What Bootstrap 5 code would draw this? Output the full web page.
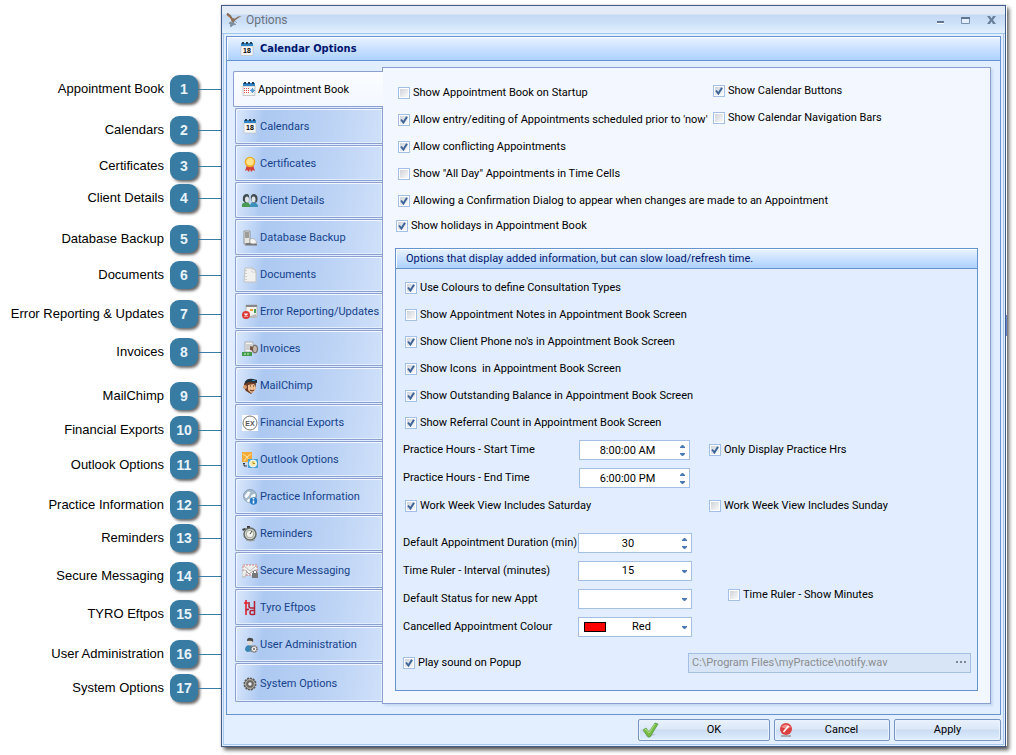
<!DOCTYPE html>
<html lang="en">
<head>
<meta charset="utf-8">
<meta name="viewport" content="width=device-width, initial-scale=1">
<title>Calendar Options</title>
<link href="https://cdn.jsdelivr.net/npm/bootstrap@5.3.0/dist/css/bootstrap.min.css" rel="stylesheet">
<style>
:root{--ui:Roboto,"Liberation Sans",sans-serif;--line:#6593cf;--soft:#a3bfe5;--tabline:#8b9fd0}
body{background:#fff;color:#000;font:11px/14px var(--ui)}
button,input,select{font:inherit}
/* numbered callouts */
.callouts{flex:0 0 221px;padding-top:75px;display:grid;align-content:start;grid-template-rows:41px 36px 32px 41px 36px 39px 38px 44px 34px 35px 40px 33px 38px 38px 40px 34px 28px;font:13px/28px "Liberation Sans",Arial,sans-serif;margin:0}
.callouts li{height:28px;display:flex;align-items:center;justify-content:flex-end;white-space:nowrap}
.callouts b{width:28px;height:28px;margin-left:6px;border-radius:9px;background:#387ba3;color:#e8f3fa;text-align:center;font-size:14px;box-shadow:2px 2px 3px rgba(0,0,0,.6)}
.callouts li::after{content:"";width:23px;height:1px;background:#387ba3}
/* window frame */
.win{position:relative;min-width:0;margin:5px 10px 9px 0;border:1px solid #3f5c8d;background:#e3efff;box-shadow:3px 3px 4px rgba(0,0,0,.65),0 0 2px rgba(0,0,0,.2)}
.win::after{content:"";position:absolute;top:0;bottom:0;right:-2px;width:1px;background:linear-gradient(#fff 309px,#6c86d0 309px 330px,#fff 330px)}
.titlebar{height:28px;padding:0 9px 0 4px;border-bottom:1px solid #9cc7f0;background:linear-gradient(#e3ebf7 0 8px,#c6d9f3 9px,#cbdff7 16px,#e3f1fe);color:#69727e;font-size:12px}
.titlebar button{border:0;padding:0;background:none;line-height:0}
.winbody{margin:0 1px 1px;padding:2px 2px 3px;border:solid #a6c8f0;border-width:0 1px 1px}
.bar{background:linear-gradient(#e9f3ff,#c5deff 60%,#add1ff);border-bottom:1px solid var(--line);box-shadow:inset 1px 1px #fff}
.panel{border:1px solid var(--line)}
.panel>.bar{height:24px;padding-left:13px;gap:6px;font:bold 11px/14px "DejaVu Sans Condensed",sans-serif;color:#00156e}
.panelbody{padding:6px 9px 10px 6px;background:#e1eeff}
/* page tabs */
.pages{flex:0 0 149px;padding-top:4px;gap:1px}
.pages .nav-link{display:flex;align-items:center;height:36px;width:147px;margin-left:2px;padding:2px 0 0 6px;border:1px solid var(--tabline);border-right-width:0;border-radius:2px 0 0 2px;box-shadow:inset 1px 1px #f2f7ff,inset -1px -1px #e3eefc;background:linear-gradient(100deg,#dbe8fb 0,#c6daf7 9%,#adc9f1 19%,#b8d0f4 55%,#cfe0f9);color:#15428b;white-space:nowrap;gap:2px}
.pages .nav-link.active{position:relative;width:150px;margin-left:0;padding-left:8px;background:linear-gradient(#fbfdff,#f3f7ff);border-color:var(--tabline);box-shadow:none;color:#000}
.pages .nav-link:last-child{height:39px}
.pages svg{flex:none}
.pane{min-width:0;margin-left:-1px;border:1px solid var(--tabline);padding:9px 12px 12px;background:#f3f7ff;box-shadow:2px 2px 2px #c6d9f3}
.pages{z-index:1}
/* controls */
.opt{display:flex;align-items:center;height:27px;gap:3px;white-space:nowrap}
.opt .form-check-input{flex:none;width:12px;height:12px;margin:0;border:1px solid var(--soft);border-radius:0;background:linear-gradient(135deg,#cfd3d9,#fafafa) center/8px 8px no-repeat #fff;box-shadow:none}
.opt .form-check-input:checked{background:url("data:image/svg+xml,%3Csvg xmlns='http://www.w3.org/2000/svg' viewBox='0 0 10 10'%3E%3Cpath d='M2 4.5l2.4 3L8 1.8' fill='none' stroke='%233d6599' stroke-width='2'/%3E%3C/svg%3E") center/10px 10px no-repeat,linear-gradient(135deg,#cfd3d9,#fafafa) center/8px 8px no-repeat #fff}
.leftopts{flex:0 0 318px;min-width:0;width:318px;padding:2px 0 0 3px}
.leftopts .tight{height:24px;margin-left:-2px}
.group{margin-top:10px;border:1px solid var(--line);background:#e2eeff}
.group>.bar{height:20px;padding-left:10px;color:#00156e}
.groupbody{padding:5px 6px 14px 7px}
.indent{padding-left:2px}
.fields{display:grid;grid-template-columns:175px 114px 1fr;grid-auto-rows:28px;align-items:center}
.fields.lower{margin-top:9px}
.fields .side{margin-left:17px}
.fields .far{margin-left:36px;margin-bottom:8px}
.box{display:flex;align-items:center;height:20px;border:1px solid var(--soft);background:#fff}
.box.narrow{margin:0 2px 0 1px}
.box input,.box select{flex:1;min-width:0;width:0;height:18px;padding:0;border:0;background:none;text-align:center;text-align-last:center;outline:0;color:#000}
.box select{appearance:none;padding-right:14px;background:url("data:image/svg+xml,%3Csvg xmlns='http://www.w3.org/2000/svg' viewBox='0 0 5 3'%3E%3Cpath d='M0 0h5v1L3 3H2L0 1z' fill='%234a7ab5'/%3E%3C/svg%3E") right 4px center/5px 3px no-repeat}
.spin{width:14px;display:flex;flex-direction:column}
.spin button{height:8px;padding:0;border:0;background:none;line-height:0}
.swatch{width:22px;height:10px;margin-left:5px;border:1px solid #000;background:red}
.box.path{width:283px;background:#d8e5f6}
.box.path input{padding-left:3px;text-align:left;text-align-last:left;color:#8b8d90}
.path button{border:0;padding:0 3px;background:none;line-height:0}
.cmd{height:22px;padding:0;border:1px solid #7793c0;border-radius:2px;background:linear-gradient(#e9f1fc,#dce8f8 45%,#cbdcf3 50%,#dfeeff);box-shadow:inset 0 0 0 1px #e9f3ff;color:#000;display:flex;align-items:center}
.cmd span{flex:1}
.cmd svg{margin-left:3px}
.ok{width:132px}.cancel{width:116px}.apply{width:107px}
</style>
</head>
<body>
<div class="d-flex align-items-start">
<ol class="callouts list-unstyled" aria-label="Callouts">
<li>Appointment Book<b>1</b></li><li>Calendars<b>2</b></li><li>Certificates<b>3</b></li><li>Client Details<b>4</b></li><li>Database Backup<b>5</b></li><li>Documents<b>6</b></li><li>Error Reporting &amp; Updates<b>7</b></li><li>Invoices<b>8</b></li><li>MailChimp<b>9</b></li><li>Financial Exports<b>10</b></li><li>Outlook Options<b>11</b></li><li>Practice Information<b>12</b></li><li>Reminders<b>13</b></li><li>Secure Messaging<b>14</b></li><li>TYRO Eftpos<b>15</b></li><li>User Administration<b>16</b></li><li>System Options<b>17</b></li>
</ol>
<main class="win flex-grow-1">
<header class="titlebar d-flex align-items-center">
<svg width="16" height="16" viewBox="0 0 16 16"><path d="M1 1.500l3 2.500 2 3" stroke="#7d6a5a" stroke-width="2" fill="none"/><path d="M1 3l4 3 1 3" stroke="#b46a35" fill="none"/><path d="M6 6l3 .5 3-2 3.500-.5-3 2-3 2-2 3-2-1z" fill="#8b735f"/><path d="M4 10l3 .5 3 2-3 .5-2 2-1-1 1-1.500-2-1zM9 9l2 2" fill="#7c8d9c" stroke="#7c8d9c" stroke-width=".6"/></svg>
<span class="ms-1 flex-grow-1">Options</span>
<button aria-label="Minimize"><svg width="8" height="14"><path d="M0 8h7v2H0z" fill="#5f7590"/><path d="M0 10h7v1H0z" fill="#fff"/></svg></button>
<button class="ms-3" aria-label="Maximize"><svg width="10" height="14"><path d="M.5 4.500h8v6h-8z" fill="#e3effc" stroke="#7890b0"/><path d="M0 4h9v2H0z" fill="#5f7590"/></svg></button>
<button class="ms-3" aria-label="Close"><svg width="9" height="14"><path d="M0 3h3l1.500 2.500L6 3h3L6 7l3 4H6L4.500 8.500 3 11H0l3-4z" fill="#6a7f99"/></svg></button>
</header>
<div class="winbody">
<section class="panel">
<div class="bar d-flex align-items-center">
<svg width="14" height="14" viewBox="0 0 14 14"><path d="M1 4h12v9.500H1z" fill="#f6f6f6" stroke="#bbb" stroke-width=".6"/><path d="M1 1h12v3H1z" fill="#2f82c4"/><path d="M2 0h2v2H2zM6 0h2v2H6zM10 0h2v2h-2z" fill="#263a50"/><text x="7" y="11" text-anchor="middle" font-family="Liberation Sans" font-weight="bold" font-size="7">18</text></svg>
<span>Calendar Options</span></div>
<div class="panelbody d-flex">
<nav class="pages nav flex-column flex-nowrap" aria-label="Option pages">
<button class="nav-link active"><svg width="14" height="16" viewBox="0 0 14 16"><path d="M1 4h12v9.500H1z" fill="#f8f8f8" stroke="#aaa" stroke-width=".6"/><path d="M1 1h12v3H1z" fill="#2f82c4"/><path d="M2 0h2v2H2zM6 0h2v2H6zM10 0h2v2h-2z" fill="#263a50"/><path d="M2 6.500h6M2 8.500h5M2 10.500h5" stroke="#e24b4b" stroke-dasharray="1 1"/><path d="M8 8.500h5M10.500 6v5M8.800 7l3.500 3.300M12.300 7L8.800 10.300" stroke="#5b9bd0"/></svg>Appointment Book</button>
<button class="nav-link"><svg width="16" height="16" viewBox="0 0 16 16"><path d="M2 4h12v10H2z" fill="#f6f6f6" stroke="#bbb" stroke-width=".6"/><path d="M2 1h12v3H2z" fill="#2f82c4"/><path d="M3 0h2v2H3zM7 0h2v2H7zM11 0h2v2h-2z" fill="#263a50"/><text x="8" y="11" text-anchor="middle" font-family="Liberation Sans" font-weight="bold" font-size="7">18</text></svg>Calendars</button>
<button class="nav-link"><svg width="16" height="16" viewBox="0 0 16 16"><path d="M5 9l-2 6 2-1 2 2 1-3 1 3 2-2 2 1-2-6z" fill="#d6403a"/><circle cx="8" cy="6" r="5.300" fill="#f3a823"/><circle cx="8" cy="5.800" r="3.800" fill="#ffe48b"/></svg>Certificates</button>
<button class="nav-link"><svg width="16" height="16" viewBox="0 0 16 16"><path d="M0 14v-3l3-2h3l2 3v2z" fill="#499a52"/><path d="M8 14v-2l2-3h3l3 3v2z" fill="#3c91bb"/><path d="M1 8q-1-7 4-7 3 0 2 7l-3 2zM9 7q-1-6 3-6 5 1 3 8l-4 1z" fill="#414c50"/><ellipse cx="5" cy="6.500" rx="2" ry="3" fill="#dfe5e7"/><ellipse cx="11.500" cy="6.500" rx="2" ry="3" fill="#dfe5e7"/></svg>Client Details</button>
<button class="nav-link"><svg width="16" height="16" viewBox="0 0 16 16"><path d="M2 1h6v13H2z" fill="#e5e5e2" stroke="#777" stroke-width=".7"/><path d="M3 3h4M3 5h4M3 7h4" stroke="#555"/><path d="M4 13h8l3 1v1.500H3z" fill="#777"/><path d="M8 9q5-2 7 4l-4 1-3-1z" fill="#f5f5f5" stroke="#999" stroke-width=".6"/></svg>Database Backup</button>
<button class="nav-link"><svg width="16" height="16" viewBox="0 0 16 16"><path d="M3 1h8l3 3v11H2z" fill="#f1f1ef" stroke="#c2c2c2"/><path d="M10 1v4h4z" fill="#fff" stroke="#bbb" stroke-width=".6"/><path d="M4 3v10" stroke="#aaa" stroke-dasharray="1 2"/></svg>Documents</button>
<button class="nav-link"><svg width="16" height="16" viewBox="0 0 16 16"><path d="M4 1h11v12H4z" fill="#f3f2ed" stroke="#aaa" stroke-width=".7"/><path d="M4 1h11v2H4z" fill="#888"/><path d="M8 5h3v2H8z" fill="#e9a23c"/><path d="M12 5h2v4h-2z" fill="#4a9a58"/><path d="M8 12l6-2 1 4H8z" fill="#bbb"/><circle cx="4" cy="11" r="4" fill="#da3a36"/><path d="M2.500 9.500l3 3M5.500 9.500l-3 3" stroke="#fff" stroke-width="1.300"/></svg>Error Reporting/Updates</button>
<button class="nav-link"><svg width="16" height="16" viewBox="0 0 16 16"><path d="M3 1h8v10H3z" fill="#f4f4f4" stroke="#999" stroke-width=".7"/><path d="M5 3v6M7 3v6M9 3v6" stroke="#aaa"/><ellipse cx="13" cy="8" rx="2.500" ry="4" fill="#c3b9af" stroke="#6b5a50"/><path d="M8 5l3 1v4l-3-1z" fill="#76584a"/><path d="M0 11h10v4H0z" fill="#419b4a"/><path d="M2 13h6" stroke="#d8f2d5" stroke-dasharray="2 1"/></svg>Invoices</button>
<button class="nav-link"><svg width="16" height="16" viewBox="0 0 16 16"><path d="M2 6q1-4 7-4 5 0 5 4l-1 6-4 4-5-3-2-3z" fill="#6f3c22"/><path d="M6 7l6-1 2 4-2 4-3 1-3-3z" fill="#eebf95"/><path d="M3 4q2-4 8-3l4 1v3l-8-1-4 2z" fill="#24313d"/><path d="M10 2h3v1h-3z" fill="#3586c4"/><circle cx="3" cy="9" r="2" fill="#d59b70"/><path d="M8 8h1M11 8h1M8 12q2 2 4 0" stroke="#4b2516" fill="none"/></svg>MailChimp</button>
<button class="nav-link"><svg width="16" height="16" viewBox="0 0 16 16"><path d="M0 0h16v16H0z" fill="#fff"/><circle cx="8" cy="8" r="7" fill="#fff" stroke="#777"/><text x="8" y="10.500" text-anchor="middle" font-family="Liberation Sans" font-size="7" font-weight="bold" fill="#555">EX</text></svg>Financial Exports</button>
<button class="nav-link"><svg width="16" height="16" viewBox="0 0 16 16"><path d="M0 0h10v10H0z" fill="#f3ac37"/><path d="M1 2l4 3 4-3M2 9l3-4 3 4" stroke="#ffe6a8" fill="none"/><path d="M6 7h10v9H6z" fill="#48a3d7"/><circle cx="11" cy="11.500" r="3.500" fill="#f7e9a7" stroke="#fff"/><path d="M11 9.500v2h2" stroke="#b78d25" fill="none"/><path d="M2 11v3h3M1 12l1-1 1 1" stroke="#333" fill="none"/></svg>Outlook Options</button>
<button class="nav-link"><svg width="16" height="16" viewBox="0 0 16 16"><circle cx="8" cy="7" r="6.500" fill="#a6bdcf" stroke="#738aa0" stroke-width=".7"/><path d="M2 7l4-5 3 1-2 4-3 3zM9 6l4-2 1 3-3 3-3-1zM4 12l3-3 2 2-2 3z" fill="#f7fafc" stroke="#8ca1b4" stroke-width=".5"/><circle cx="11.500" cy="12" r="3.700" fill="#277bc6"/><path d="M11.500 9v1.500M11.500 11.500v3" stroke="#fff" stroke-width="1.500"/></svg>Practice Information</button>
<button class="nav-link"><svg width="16" height="16" viewBox="0 0 16 16"><path d="M5 0h3v2H5zM0 3l3-1 1 1-3 2z" fill="#3a3a3a"/><circle cx="8" cy="8" r="6" fill="#d6d8d2" stroke="#676b67" stroke-width="1.500"/><circle cx="8" cy="8" r="3.800" fill="#f1f1eb" stroke="#a2a69e"/><path d="M8 8l2-3" stroke="#444"/><path d="M4 14q5 2 9 0" stroke="#999" fill="none"/></svg>Reminders</button>
<button class="nav-link"><svg width="16" height="16" viewBox="0 0 16 16"><path d="M1 2h14v10H1z" fill="#f7f6f4" stroke="#d77d74" stroke-dasharray="2 1"/><path d="M2 3l6 5 6-5M0 8q3-2 5 0l-2 6H0z" fill="#eee" stroke="#aaa" stroke-width=".8"/><path d="M10 10h6v5h-6z" fill="#777"/><path d="M11.500 10V8q1.500-2 3 0v2" fill="none" stroke="#777"/><path d="M4 8l3 3 4-3" fill="none" stroke="#999"/></svg>Secure Messaging</button>
<button class="nav-link"><svg width="16" height="16" viewBox="0 0 16 16"><path d="M4 0v15M2 3h4" fill="none" stroke="#e3202c" stroke-width="1.600"/><path d="M7 2v4q0 2 2 2h3M12.500 1v14M4 10.500q1-1.500 3-1M12 10.500H9.500q-1.500 0-1.500 2t1.500 2H12" fill="none" stroke="#b32232" stroke-width="1.500"/></svg>Tyro Eftpos</button>
<button class="nav-link"><svg width="16" height="16" viewBox="0 0 16 16"><path d="M3 13q0-5 5-5 4 0 4 6l-7 1z" fill="#3b85b3"/><ellipse cx="8" cy="5" rx="2.500" ry="3.500" fill="#e0d9d3"/><path d="M5 4q0-4 4-3 3 0 2 4-2-2-6-1z" fill="#4b4b4b"/><circle cx="12" cy="12" r="3" fill="#eee" stroke="#77716c" stroke-width="1.500" stroke-dasharray="1.500 .5"/><circle cx="12" cy="12" r="1" fill="#666"/></svg>User Administration</button>
<button class="nav-link"><svg width="16" height="16" viewBox="0 0 16 16"><circle cx="8" cy="8" r="5.500" fill="#77736e" stroke="#5d5955" stroke-width="2" stroke-dasharray="2 .8"/><circle cx="8" cy="8" r="4.500" fill="none" stroke="#b6b3ac"/><circle cx="8" cy="8" r="2.300" fill="#eee" stroke="#55514c"/></svg>System Options</button>
</nav>
<div class="pane flex-grow-1">
<div class="d-flex">
<div class="leftopts">
<label class="opt"><input class="form-check-input" type="checkbox">Show Appointment Book on Startup</label>
<label class="opt"><input class="form-check-input" type="checkbox" checked>Allow entry/editing of Appointments scheduled prior to 'now'</label>
<label class="opt"><input class="form-check-input" type="checkbox" checked>Allow conflicting Appointments</label>
<label class="opt"><input class="form-check-input" type="checkbox">Show "All Day" Appointments in Time Cells</label>
<label class="opt"><input class="form-check-input" type="checkbox" checked>Allowing a Confirmation Dialog to appear when changes are made to an Appointment</label>
<label class="opt tight"><input class="form-check-input" type="checkbox" checked>Show holidays in Appointment Book</label>
</div>
<div>
<label class="opt"><input class="form-check-input" type="checkbox" checked>Show Calendar Buttons</label>
<label class="opt"><input class="form-check-input" type="checkbox">Show Calendar Navigation Bars</label>
</div>
</div>
<section class="group">
<div class="bar d-flex align-items-center">Options that display added information, but can slow load/refresh time.</div>
<div class="groupbody">
<div class="indent">
<label class="opt"><input class="form-check-input" type="checkbox" checked>Use Colours to define Consultation Types</label>
<label class="opt"><input class="form-check-input" type="checkbox">Show Appointment Notes in Appointment Book Screen</label>
<label class="opt"><input class="form-check-input" type="checkbox" checked>Show Client Phone no's in Appointment Book Screen</label>
<label class="opt"><input class="form-check-input" type="checkbox" checked>Show Icons&nbsp; in Appointment Book Screen</label>
<label class="opt"><input class="form-check-input" type="checkbox" checked>Show Outstanding Balance in Appointment Book Screen</label>
<label class="opt"><input class="form-check-input" type="checkbox" checked>Show Referral Count in Appointment Book Screen</label>
</div>
<div class="fields">
<label for="start">Practice Hours - Start Time</label>
<div class="box narrow"><input id="start" value="8:00:00 AM"><span class="spin"><button aria-label="Later start"><svg width="5" height="3"><path d="M2 0h1l2 2v1H0V2z" fill="#4a7ab5"/></svg></button><button aria-label="Earlier start"><svg width="5" height="3"><path d="M0 0h5v1L3 3H2L0 1z" fill="#4a7ab5"/></svg></button></span></div>
<label class="opt side"><input class="form-check-input" type="checkbox" checked>Only Display Practice Hrs</label>
<label for="end">Practice Hours - End Time</label>
<div class="box narrow"><input id="end" value="6:00:00 PM"><span class="spin"><button aria-label="Later end"><svg width="5" height="3"><path d="M2 0h1l2 2v1H0V2z" fill="#4a7ab5"/></svg></button><button aria-label="Earlier end"><svg width="5" height="3"><path d="M0 0h5v1L3 3H2L0 1z" fill="#4a7ab5"/></svg></button></span></div>
<span></span>
<label class="opt indent"><input class="form-check-input" type="checkbox" checked>Work Week View Includes Saturday</label>
<span></span>
<label class="opt side"><input class="form-check-input" type="checkbox">Work Week View Includes Sunday</label>
</div>
<div class="fields lower">
<label for="dur">Default Appointment Duration (min)</label>
<div class="box"><input id="dur" value="30"><span class="spin"><button aria-label="Increase duration"><svg width="5" height="3"><path d="M2 0h1l2 2v1H0V2z" fill="#4a7ab5"/></svg></button><button aria-label="Decrease duration"><svg width="5" height="3"><path d="M0 0h5v1L3 3H2L0 1z" fill="#4a7ab5"/></svg></button></span></div>
<span></span>
<label for="ruler">Time Ruler - Interval (minutes)</label>
<div class="box"><select id="ruler"><option>15</option></select></div>
<span></span>
<label for="status">Default Status for new Appt</label>
<div class="box"><select id="status"><option></option></select></div>
<label class="opt far"><input class="form-check-input" type="checkbox">Time Ruler - Show Minutes</label>
<label for="colour">Cancelled Appointment Colour</label>
<div class="box"><span class="swatch"></span><select id="colour"><option>Red</option></select></div>
</div>
<div class="mt-2 d-flex align-items-center justify-content-between">
<label class="opt"><input class="form-check-input" type="checkbox" checked>Play sound on Popup</label>
<div class="box path"><input aria-label="Sound file" value="C:\Program Files\myPractice\notify.wav" disabled><button aria-label="Browse" disabled><svg width="11" height="3"><path d="M0 0h2v2H0zM4 0h2v2H4zM8 0h2v2H8z" fill="#7f8791"/></svg></button></div>
</div>
</div>
</section>
</div>
</div>
</section>
<footer class="d-flex justify-content-end mt-1 gap-1">
<button class="cmd ok"><svg width="17" height="16" viewBox="0 0 17 16"><path d="M3 14q6 2 11-2l-5-1z" fill="#bbc6cf"/><path d="M1 8l3-2 3 4 6-9 3 1-8 13H6z" fill="#77bb45" stroke="#4b9434" stroke-width=".7"/><path d="M2.500 8L4 7l3 4 6-9" fill="none" stroke="#b5e187"/></svg><span>OK</span></button>
<button class="cmd cancel"><svg width="16" height="16" viewBox="0 0 16 16"><path d="M3 13h10v2H3z" fill="#a5aab3"/><circle cx="8" cy="7" r="6" fill="#db4041"/><path d="M3 5q5-5 10 0l-4 2z" fill="#f1908c"/><path d="M5.500 10l5-6" stroke="#fff" stroke-width="1.600"/></svg><span>Cancel</span></button>
<button class="cmd apply"><span>Apply</span></button>
</footer>
</div>
</main>
</div>
<script src="https://cdn.jsdelivr.net/npm/bootstrap@5.3.0/dist/js/bootstrap.bundle.min.js"></script>
</body>
</html>
